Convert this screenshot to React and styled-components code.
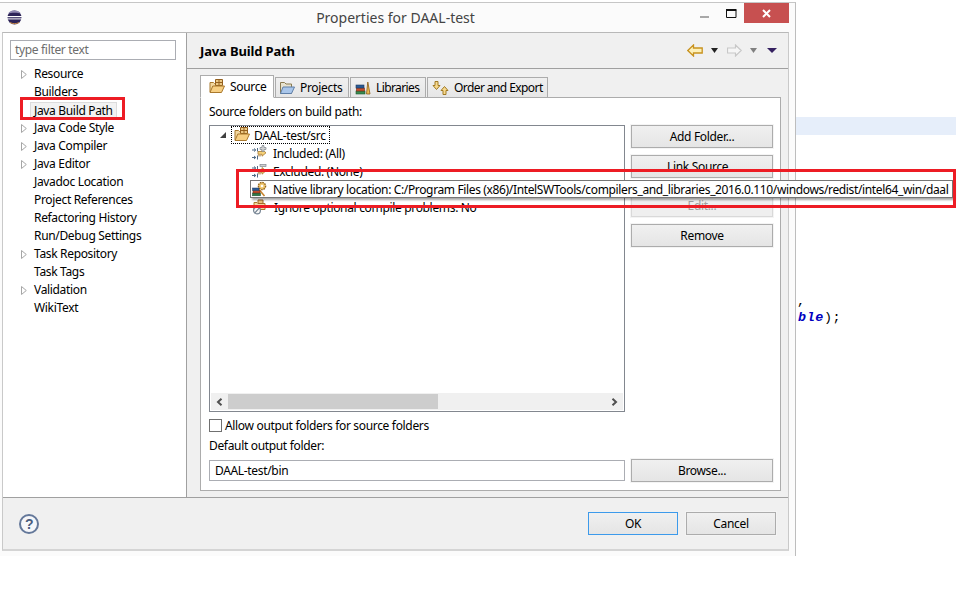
import React from "react";
import styled, { createGlobalStyle } from "styled-components";

const UI_FONT = `"Noto Sans", "Open Sans", "Liberation Sans", sans-serif`;

const GlobalStyle = createGlobalStyle`
	html, body {
		margin: 0;
		background: #fff;
	}
	* {
		box-sizing: border-box;
	}
	svg {
		flex: none;
	}
`;

const Page = styled.div`
	position: relative;
	display: flex;
	width: 960px;
	height: 600px;
	overflow: hidden;
	background: #fff;
	color: #000;
	font-family: ${UI_FONT};
	font-size: 12px;
	letter-spacing: -0.33px;
`;

/* window */
const Dialog = styled.div`
	flex: 0 0 796px;
	width: 796px;
	height: 554px;
	margin-top: 2px;
	padding: 0 6px 5px 2px;
	background: #fbfbfb;
	border-top: 1px solid #c6c6c6;
	border-right: 1px solid #bdbdbd;
	display: flex;
	flex-direction: column;
	overflow: hidden;
`;

const TitleBar = styled.div`
	flex: 0 0 29px;
	display: grid;
	grid-template-columns: 1fr auto 1fr;
	align-items: center;
`;

const TitleIcon = styled.div`
	display: flex;
	padding-left: 5px;
`;

const TitleText = styled.div`
	font-size: 14px;
	letter-spacing: 0;
	color: #444;
	margin-top: -1px;
`;

const WindowControls = styled.div`
	display: flex;
	justify-content: flex-end;
	align-self: start;
	align-items: flex-start;
`;

const ControlBtn = styled.div`
	width: ${(p) => p.$w}px;
	height: 20px;
	display: flex;
	align-items: center;
	justify-content: center;
	background: ${(p) => p.$bg || "transparent"};
`;

const Frame = styled.div`
	flex: 1;
	display: flex;
	flex-direction: column;
	border: 1px solid #c9c9c9;
	border-bottom: 2px solid #d4d4d4;
	border-top-color: #b8b8b8;
	min-height: 0;
	min-width: 0;
`;

const Main = styled.div`
	flex: 0 0 464px;
	display: flex;
	min-height: 0;
`;

/* left tree */
const Sidebar = styled.div`
	flex: 0 0 184px;
	background: #fff;
	border-right: 1px solid #a0a0a0;
	padding-top: 7px;
`;

const FilterInput = styled.div`
	height: 20px;
	margin: 0 10px 5px 7px;
	padding-left: 4px;
	border: 1px solid #abadb3;
	color: #6d6d6d;
	line-height: 18px;
	background: #fff;
`;

const NavRow = styled.div`
	display: flex;
	align-items: center;
	height: 18px;
	padding-left: 18px;
	line-height: 18px;
	white-space: nowrap;
`;

const ArrowSlot = styled.span`
	flex: 0 0 13px;
	display: flex;
	align-items: center;
	height: 18px;
`;

const NavLabel = styled.span`
	${(p) =>
		p.$selected &&
		`
		margin-left: -4px;
		padding: 0 3px;
		height: 17px;
		line-height: 15px;
		background: #f2f2f2;
		border: 1px solid #dcdcdc;
	`}
`;

/* right side */
const Content = styled.div`
	flex: 1;
	display: flex;
	flex-direction: column;
	background: #f0f0f0;
	min-width: 0;
`;

const ContentHead = styled.div`
	flex: 0 0 36px;
	display: flex;
	align-items: center;
	padding: 1px 11px 0 13px;
	border-bottom: 1px solid #a0a0a0;
`;

const ContentTitle = styled.div`
	flex: 1;
	font-weight: 700;
	font-size: 13px;
	letter-spacing: -0.15px;
`;

const NavIcons = styled.div`
	display: flex;
	align-items: center;
	gap: 8px;
	margin-top: -1px;
`;

const NavSlot = styled.span`
	display: flex;
	margin-left: ${(p) => p.$ml}px;
`;

const TabArea = styled.div`
	flex: 1;
	display: flex;
	flex-direction: column;
	padding: 6px 7px 6px 13px;
	min-height: 0;
	min-width: 0;
`;

const TabStrip = styled.div`
	display: flex;
	align-items: flex-end;
	height: 23px;
	margin-bottom: -1px;
	position: relative;
	z-index: 1;
`;

const Tab = styled.div`
	display: flex;
	align-items: center;
	gap: 5px;
	width: ${(p) => p.$w}px;
	height: ${(p) => (p.$active ? 23 : 21)}px;
	padding-left: ${(p) => p.$pad}px;
	letter-spacing: ${(p) => p.$track || -0.33}px;
	background: ${(p) => (p.$active ? "#fff" : "linear-gradient(#f0f0f0, #e6e6e6)")};
	border: 1px solid #acacac;
	border-bottom: ${(p) => (p.$active ? "1px solid #fff" : "1px solid #acacac")};
	margin-left: ${(p) => (p.$active ? 0 : 1)}px;
	white-space: nowrap;
`;

const TabBody = styled.div`
	flex: 1;
	display: flex;
	flex-direction: column;
	padding: 6px 7px 0 8px;
	background: #fff;
	border: 1px solid #acacac;
	min-height: 0;
	min-width: 0;
`;

const FieldLabel = styled.div`
	height: 16px;
	line-height: 16px;
	margin-top: ${(p) => p.$top || 0}px;
	white-space: nowrap;
`;

const PathRow = styled.div`
	flex: 0 0 287px;
	display: flex;
	gap: 6px;
	margin-top: 5px;
`;

const Tree = styled.div`
	flex: 0 0 416px;
	width: 416px;
	display: flex;
	flex-direction: column;
	border: 1px solid #82878f;
	background: #fff;
	overflow: hidden;
`;

const TreeRows = styled.div`
	flex: 1;
`;

const TreeRow = styled.div`
	display: flex;
	align-items: center;
	height: 18px;
	padding-left: ${(p) => p.$indent}px;
	gap: ${(p) => p.$gap}px;
	white-space: nowrap;
`;

const RootLabel = styled.div`
	display: flex;
	align-items: center;
	gap: 4px;
	height: 18px;
	padding: 0 3px 0 2px;
	border: 1px dotted #000;
`;

const ExpandedArrow = styled.span`
	width: 0;
	height: 0;
	border-left: 6px solid transparent;
	border-bottom: 6px solid #404040;
`;

const HScroll = styled.div`
	flex: 0 0 17px;
	display: flex;
	margin: 0 1px 1px;
	padding: 1px 0;
	background: #f0f0f0;
`;

const ScrollBtn = styled.div`
	flex: 0 0 17px;
	display: flex;
	align-items: center;
	justify-content: center;
`;

const ScrollThumb = styled.div`
	flex: 0 0 210px;
	background: #cdcdcd;
`;

const ScrollRest = styled.div`
	flex: 1;
`;

const SideButtons = styled.div`
	flex: 0 0 142px;
	display: flex;
	flex-direction: column;
	gap: 7px;
`;

const Button = styled.div`
	flex: none;
	width: ${(p) => p.$w || 142}px;
	height: 23px;
	display: flex;
	align-items: center;
	justify-content: center;
	margin-top: ${(p) => p.$top || 0}px;
	color: ${(p) => (p.$disabled ? "#a0a0a0" : "#000")};
	background: ${(p) => (p.$disabled ? "#efefef" : "linear-gradient(#f0f0f0, #e5e5e5)")};
	border: 1px solid ${(p) => (p.$focus ? "#3c9aeb" : p.$disabled ? "#d9d9d9" : "#acacac")};
	box-shadow: ${(p) => (p.$focus ? "none" : "0 0 0 1px #f4f4f4")};
`;

const CheckRow = styled.div`
	display: flex;
	align-items: center;
	gap: 3px;
	height: 18px;
	margin-top: 4px;
	white-space: nowrap;
`;

const CheckBox = styled.span`
	width: 13px;
	height: 13px;
	background: #fff;
	border: 1px solid #707070;
`;

const OutputRow = styled.div`
	display: flex;
	align-items: center;
	gap: 6px;
	margin-top: 5px;
`;

const TextField = styled.div`
	flex: 0 0 416px;
	height: 21px;
	padding-left: 5px;
	line-height: 19px;
	border: 1px solid #abadb3;
	background: #fff;
`;

const Footer = styled.div`
	flex: 1;
	display: flex;
	align-items: center;
	gap: 8px;
	padding: 0 12px 0 16px;
	background: #f0f0f0;
	border-top: 1px solid #a0a0a0;
`;

const HelpIcon = styled.div`
	width: 20px;
	height: 20px;
	margin-right: auto;
	display: flex;
	align-items: center;
	justify-content: center;
	border: 2px solid #64789a;
	border-radius: 50%;
	color: #4a5d7e;
	font-family: "Liberation Sans", sans-serif;
	font-size: 14px;
	font-weight: 700;
	background: #f6f7fa;
`;

/* editor peeking out behind the dialog */
const EditorPeek = styled.div`
	flex: 1;
	overflow: hidden;
	min-width: 0;
`;

const CaretLine = styled.div`
	width: 160px;
	height: 18px;
	margin-top: 117px;
	background: #e6eefa;
`;

const CodeBlock = styled.div`
	margin-top: 159px;
	font-family: "Liberation Mono", monospace;
	font-size: 13.4px;
	letter-spacing: 0.6px;
	line-height: 16px;
	white-space: pre;
`;

const CodeLine = styled.div`
	margin-left: ${(p) => p.$shift}px;
`;

const Param = styled.span`
	color: #0000c0;
	font-style: italic;
	font-weight: 700;
`;

/* annotations on top of everything */
const RedBox = styled.div`
	position: absolute;
	left: ${(p) => p.$x}px;
	top: ${(p) => p.$y}px;
	width: ${(p) => p.$w}px;
	height: ${(p) => p.$h}px;
	border: 3px solid #ed1c24;
	z-index: 6;
	pointer-events: none;
`;

const Tooltip = styled.div`
	position: absolute;
	left: 250px;
	top: 180px;
	width: 703px;
	height: 18px;
	display: flex;
	align-items: center;
	gap: 5px;
	padding-left: 1px;
	background: #fff;
	border: 1px solid #767676;
	box-shadow: 2px 2px 2px rgba(0, 0, 0, 0.35);
	letter-spacing: -0.36px;
	white-space: nowrap;
	z-index: 5;
`;

const EclipseLogo = () => (
	<svg width="15" height="15" viewBox="0 0 15 15">
		<circle cx="7.5" cy="7.5" r="7" fill="#2c2358" />
		<path d="M1 3.6C3 1 5 .6 7.5.6S12 1.2 14 3.6C11 2.4 4 2.4 1 3.6Z" fill="#8f88b0" />
		<rect x="0" y="6" width="15" height="1.2" fill="#fff" />
		<rect x="0" y="8.4" width="15" height="1" fill="#fff" />
		<path d="M3 12.6c3 1.4 6 1.4 9 0" stroke="#f0a040" strokeWidth=".8" fill="none" />
	</svg>
);

const PackageFolder = () => (
	<svg width="16" height="16" viewBox="0 0 16 16">
		<path d="M1 3.500h3.500l1 1H8v8.500H1Z" fill="#f3d8a0" stroke="#a9782c" />
		<path d="M6.500 .5h7v6h-7Z" fill="#ecca86" stroke="#94601f" />
		<path d="M10 .5v6M6.500 3.500h7" stroke="#94601f" />
		<path d="M1 13.500 3.800 7H15.500l-3 6.500Z" fill="#f7cf83" stroke="#a9782c" />
	</svg>
);

const BlueFolder = () => (
	<svg width="16" height="16" viewBox="0 0 16 16">
		<path d="M1.500 2.500h4l1.500 1.500h5.500v9.500H1.500Z" fill="#e6e2cf" stroke="#8a7a50" />
		<path d="M1.500 13.500 4 7h11.500l-3 6.500Z" fill="#a9c6ea" stroke="#5f7fa8" />
	</svg>
);

const BooksIcon = () => (
	<svg width="16" height="16" viewBox="0 0 16 16">
		<rect x="1" y="11" width="9" height="3" fill="#3a8a50" stroke="#1d5a30" strokeWidth=".6" />
		<rect x="1.500" y="8" width="8" height="3" fill="#c8502c" stroke="#7a2c14" strokeWidth=".6" />
		<rect x="1" y="5" width="8" height="3" fill="#2c5a94" stroke="#1c3a60" strokeWidth=".6" />
		<path d="M11.500 14 12.800 2l2.200 12Z" fill="#f0c050" stroke="#8a5a14" strokeWidth=".8" />
	</svg>
);

const OrderIcon = () => (
	<svg width="17" height="16" viewBox="0 0 17 16">
		<path d="M3 1.500h3v4h2l-3.500 4-3.500-4h2Z" fill="#f7d98e" stroke="#a07a24" />
		<path d="M11 14.500h3v-4h2l-3.500-4-3.500 4h2Z" fill="#f7d98e" stroke="#a07a24" />
	</svg>
);

const TinyArrows = () => (
	<>
		<path d="M0 5h3.500M2 3.500 3.800 5 2 6.500M0 12.500h3.500M2 11 3.800 12.500 2 14M5.500 3v3.500M5.500 10.500v4" stroke="#3d5a78" strokeWidth=".9" fill="none" />
		<path d="M6 6.500h4V4.500l4 3.300-4 3.400V9.300H6Z" fill="#f6d27a" stroke="#a9782c" strokeWidth=".8" />
		<path d="M6 10.800h3" stroke="#a9782c" strokeWidth=".8" />
	</>
);

const IncludedIcon = () => (
	<svg width="15" height="16" viewBox="0 0 15 16">
		<TinyArrows />
		<path d="M10 .5h2v2h2v2h-2v2h-2v-2H8v-2h2Z" fill="#d0d0d0" stroke="#808890" strokeWidth=".7" />
	</svg>
);

const ExcludedIcon = () => (
	<svg width="15" height="16" viewBox="0 0 15 16">
		<TinyArrows />
		<rect x="8" y="1.500" width="6" height="2" fill="#d0d0d0" stroke="#808890" strokeWidth=".7" />
	</svg>
);

const NativeIcon = () => (
	<svg width="16" height="16" viewBox="0 0 16 16">
		<circle cx="10" cy="5" r="3.600" fill="#f0c870" stroke="#94651c" strokeDasharray="1.600 .8" strokeWidth="1.400" />
		<circle cx="10" cy="5" r="1.300" fill="#fff" />
		<path d="M7 8.500 12.500 15" stroke="#c8842c" strokeWidth="1.600" />
		<rect x=".5" y="12" width="8" height="2.800" fill="#2e7a48" stroke="#1d4a30" strokeWidth=".5" />
		<rect x="1" y="9.500" width="7" height="2.500" fill="#c04c2c" stroke="#70280f" strokeWidth=".5" />
		<rect x=".5" y="7" width="6.500" height="2.500" fill="#2c5a94" stroke="#1c3a60" strokeWidth=".5" />
	</svg>
);

const IgnoreIcon = () => (
	<svg width="16" height="16" viewBox="0 0 16 16">
		<path d="M2 3.500h3l1 1h7v6H2Z" fill="#f3d8a0" stroke="#a9782c" />
		<path d="M6 1h5v3.500H6Z" fill="#e9c27a" stroke="#a0682a" />
		<circle cx="5" cy="11.500" r="3.400" fill="#f6f6f6" stroke="#6c7c8c" strokeWidth="1.100" />
		<path d="M2.800 13.800 7.200 9.200" stroke="#6c7c8c" strokeWidth="1.100" />
	</svg>
);

const BackArrow = () => (
	<svg width="16" height="13" viewBox="0 0 16 13">
		<path d="M.8 6.500 6.500 1v3h8.700v5H6.500v3Z" fill="#fdf0b8" stroke="#c8921e" strokeWidth="1.300" />
	</svg>
);

const ForwardArrow = () => (
	<svg width="15" height="13" viewBox="0 0 15 13">
		<path d="M14.200 6.500 8.500 1v3H.5v5h8v3Z" fill="#f6f6f6" stroke="#c8c8c8" strokeWidth="1.200" />
	</svg>
);

const Caret = ({ color, w = 7 }) => (
	<svg width={w} height="5" viewBox={`0 0 ${w} 5`}>
		<path d={`M0 0h${w}L${w / 2} 5Z`} fill={color} />
	</svg>
);

const HollowArrow = () => (
	<svg width="6" height="9" viewBox="0 0 6 9">
		<path d="M.5.500 5.300 4.500.5 8.500Z" fill="#fff" stroke="#a6a6a6" />
	</svg>
);

const ScrollChevron = ({ left }) => (
	<svg width="7" height="8" viewBox="0 0 7 8">
		<path d={left ? "M5.500.8 2 4l3.500 3.200" : "M1.500.8 5 4 1.500 7.200"} fill="none" stroke="#505050" strokeWidth="2" />
	</svg>
);

const NAV_ITEMS = [
	{ label: "Resource", arrow: true },
	{ label: "Builders" },
	{ label: "Java Build Path", selected: true },
	{ label: "Java Code Style", arrow: true },
	{ label: "Java Compiler", arrow: true },
	{ label: "Java Editor", arrow: true },
	{ label: "Javadoc Location" },
	{ label: "Project References" },
	{ label: "Refactoring History" },
	{ label: "Run/Debug Settings" },
	{ label: "Task Repository", arrow: true },
	{ label: "Task Tags" },
	{ label: "Validation", arrow: true },
	{ label: "WikiText" },
];

const NATIVE_TEXT =
	"Native library location: C:/Program Files (x86)/IntelSWTools/compilers_and_libraries_2016.0.110/windows/redist/intel64_win/daal";

export default function App() {
	return (
		<Page>
			<GlobalStyle />
			<Dialog>
				<TitleBar>
					<TitleIcon>
						<EclipseLogo />
					</TitleIcon>
					<TitleText>Properties for DAAL-test</TitleText>
					<WindowControls>
						<ControlBtn $w={28}>
							<svg width="9" height="9" viewBox="0 0 9 9">
								<rect x="0" y="7" width="9" height="2" fill="#a8a8a8" />
							</svg>
						</ControlBtn>
						<ControlBtn $w={26}>
							<svg width="11" height="9" viewBox="0 0 11 9">
								<path d="M.5 1.500h9.500v7H.5Z" fill="none" stroke="#111" />
								<rect x="0" y="0" width="10.500" height="2" fill="#111" />
							</svg>
						</ControlBtn>
						<ControlBtn $w={45} $bg="#c75050">
							<svg width="9" height="9" viewBox="0 0 9 9">
								<path d="M1 1l7 7M8 1 1 8" stroke="#fff" strokeWidth="2" />
							</svg>
						</ControlBtn>
					</WindowControls>
				</TitleBar>
				<Frame>
					<Main>
						<Sidebar>
							<FilterInput>type filter text</FilterInput>
							{NAV_ITEMS.map((item) => (
								<NavRow key={item.label}>
									<ArrowSlot>{item.arrow && <HollowArrow />}</ArrowSlot>
									<NavLabel $selected={item.selected}>{item.label}</NavLabel>
								</NavRow>
							))}
						</Sidebar>
						<Content>
							<ContentHead>
								<ContentTitle>Java Build Path</ContentTitle>
								<NavIcons>
									<BackArrow />
									<Caret color="#222" />
									<NavSlot $ml={1}>
										<ForwardArrow />
									</NavSlot>
									<Caret color="#808080" />
									<NavSlot $ml={2}>
										<Caret color="#352060" w={10} />
									</NavSlot>
								</NavIcons>
							</ContentHead>
							<TabArea>
								<TabStrip>
									<Tab $active $w={74} $pad={8}>
										<PackageFolder />
										Source
									</Tab>
									<Tab $w={74} $pad={3}>
										<BlueFolder />
										Projects
									</Tab>
									<Tab $w={76} $pad={4} $track={-0.6}>
										<BooksIcon />
										Libraries
									</Tab>
									<Tab $w={121} $pad={4} $track={-0.58}>
										<OrderIcon />
										Order and Export
									</Tab>
								</TabStrip>
								<TabBody>
									<FieldLabel>Source folders on build path:</FieldLabel>
									<PathRow>
										<Tree>
											<TreeRows>
												<TreeRow $indent={10} $gap={5}>
													<ExpandedArrow />
													<RootLabel>
														<PackageFolder />
														DAAL-test/src
													</RootLabel>
												</TreeRow>
												<TreeRow $indent={42} $gap={6}>
													<IncludedIcon />
													Included: (All)
												</TreeRow>
												<TreeRow $indent={42} $gap={6}>
													<ExcludedIcon />
													Excluded: (None)
												</TreeRow>
												{/* this row's label only shows through the tooltip on top of it */}
												<TreeRow $indent={42} $gap={6}>
													<NativeIcon />
												</TreeRow>
												<TreeRow $indent={42} $gap={6}>
													<IgnoreIcon />
													Ignore optional compile problems: No
												</TreeRow>
											</TreeRows>
											<HScroll>
												<ScrollBtn>
													<ScrollChevron left />
												</ScrollBtn>
												<ScrollThumb />
												<ScrollRest />
												<ScrollBtn>
													<ScrollChevron />
												</ScrollBtn>
											</HScroll>
										</Tree>
										<SideButtons>
											<Button>Add Folder...</Button>
											<Button>Link Source...</Button>
											<Button $disabled $top={9}>
												Edit...
											</Button>
											<Button>Remove</Button>
										</SideButtons>
									</PathRow>
									<CheckRow>
										<CheckBox />
										Allow output folders for source folders
									</CheckRow>
									<FieldLabel $top={4}>Default output folder:</FieldLabel>
									<OutputRow>
										<TextField>DAAL-test/bin</TextField>
										<Button>Browse...</Button>
									</OutputRow>
								</TabBody>
							</TabArea>
						</Content>
					</Main>
					<Footer>
						<HelpIcon>?</HelpIcon>
						<Button $w={90} $focus>
							OK
						</Button>
						<Button $w={90}>Cancel</Button>
					</Footer>
				</Frame>
			</Dialog>
			<EditorPeek>
				<CaretLine />
				<CodeBlock>
					<CodeLine $shift={1}>,</CodeLine>
					<CodeLine $shift={2}>
						<Param>ble</Param>);
					</CodeLine>
				</CodeBlock>
			</EditorPeek>
			<Tooltip>
				<NativeIcon />
				{NATIVE_TEXT}
			</Tooltip>
			<RedBox $x={20} $y={97} $w={105} $h={23} />
			<RedBox $x={236} $y={169} $w={720} $h={39} />
		</Page>
	);
}
